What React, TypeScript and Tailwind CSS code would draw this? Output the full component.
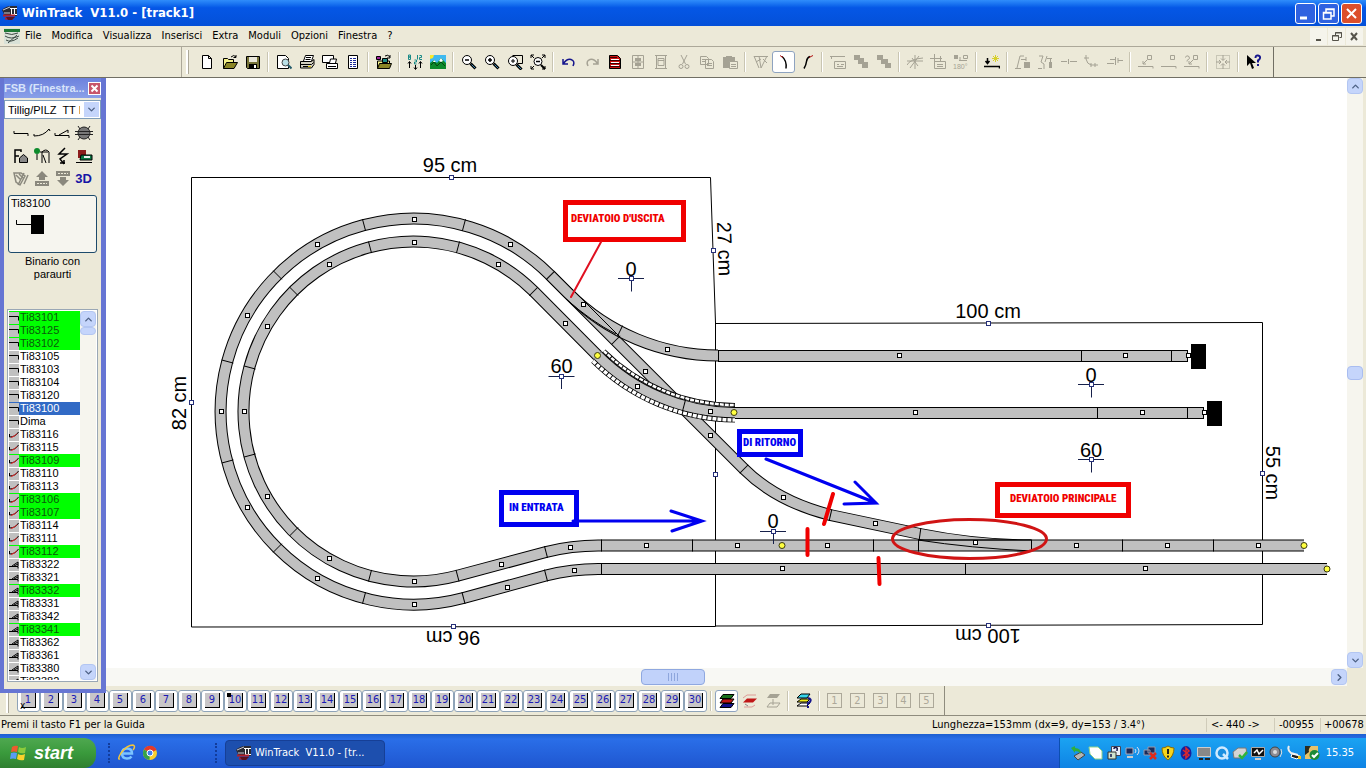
import type { ReactNode } from "react";
import clsx from "clsx";
import { ChevronDown, ChevronRight, ChevronUp } from "lucide-react";

const GREY = "#a5a294";

const MENUS = ["File", "Modifica", "Visualizza", "Inserisci", "Extra", "Moduli", "Opzioni", "Finestra", "?"];

/* ---------- toolbar icons, all on a 16x16 grid ---------- */

const lens = (
  <>
    <circle cx="6" cy="6" r="4.5" fill="#fff" stroke="#000" />
    <path d="M9.5 9.5l5 5" stroke="#000" strokeWidth="3" />
    <path d="M10.5 10.5l3.5 3.5" stroke="#3d8ab5" />
  </>
);

const ICONS: Record<string, ReactNode> = {
  Nuovo: <path d="M3.5 1.5h6l3 3v10h-9zM9.5 1.5v3h3" fill="#fff" stroke="#000" />,
  Apri: (
    <>
      <path d="M1.5 14.5v-10h4l1 1h5v3" fill="#f3f08a" stroke="#000" />
      <path d="M1.5 14.5l3-6h11l-3.500 6z" fill="#8a8526" stroke="#000" />
      <path d="M9 3q3-3 5 0m0-2v2.500h-2.500" fill="none" stroke="#000" />
    </>
  ),
  Salva: (
    <>
      <path d="M1.500 2.500h13v12h-12l-1-1z" fill="#77743a" stroke="#000" />
      <path d="M4 3h8v5H4z" fill="#e8e6da" />
      <path d="M4 10h8v4H4z" />
      <path d="M9 11h2v3H9z" fill="#fff" />
    </>
  ),
  Anteprima: (
    <>
      <path d="M1.500 1.500h8l3 3v10h-11z" fill="#fff" stroke="#000" />
      <circle cx="9.500" cy="8.500" r="3.500" fill="#b9dfe6" stroke="#444" />
      <path d="M12 11l3.500 3.500" stroke="#245b6b" strokeWidth="2" />
    </>
  ),
  Stampa: (
    <>
      <path d="M4.500 7l2-5.500h8L12.500 7" fill="#fff" stroke="#000" />
      <path d="M7 3.500h5M6.500 5.500h5" stroke="#000" />
      <path d="M1.500 7.500h11l2.500-2v5l-2.500 3.500h-11z" fill="#d5d2c2" stroke="#000" />
      <path d="M2 10.500h10.500l2-2M4 12.500h5" fill="none" stroke="#000" />
      <path d="M9 12.500h3" stroke="#d8c200" />
    </>
  ),
  "Imposta stampante": (
    <>
      <path d="M.5 1.500h11v7H.5z" fill="#fff" stroke="#000" />
      <path d="M7.500 9l1-4h6l-1 4M4.500 9.500h11v5h-11z" fill="#fff" stroke="#000" />
      <path d="M6 12.500h8" stroke="#000" />
    </>
  ),
  "Elenco pezzi": (
    <>
      <path d="M3.500 1.500h9v13h-9z" fill="#fff" stroke="#000" />
      <path d="M5 4.500h2m1 0h3M5 6.500h2m1 0h3M5 8.500h2m1 0h3M5 10.500h2m1 0h3M5 12.500h2m1 0h3" stroke="#1b2a9a" />
    </>
  ),
  Catalogo: (
    <>
      <path d="M1.500 14.500V7h12v2" fill="#f3f08a" stroke="#000" />
      <path d="M1.500 14.500l2-5h12l-2 5z" fill="#8a8526" stroke="#000" />
      <path d="M.5 2.500h4v3h-4z" fill="#a0209c" stroke="#000" />
      <path d="M6.500 4.500h5v4h-5z" fill="#1f8c86" stroke="#000" />
      <path d="M9 2q3-2 5 1m0-2v3h-3" fill="none" stroke="#000" />
    </>
  ),
  Quote: (
    <>
      <path d="M2.500 14V8m-1.500 1.500l1.500-2 1.500 2M8.500 11v4m-1.500-1.500l1.500 2 1.500-2M13.500 14V8m-1.500 1.500l1.500-2 1.500 2" fill="none" stroke="#000" />
      <path d="M1.500 1h2v2h-2zm0 2h2v2.500h-2zM7.500 6h2v2h-2v2h2M10.500 1v4.500M12.500 1.500h2v2h-2v2H15" fill="none" stroke="#198a86" />
    </>
  ),
  Paesaggio: (
    <>
      <path d="M0 1h16v14H0z" fill="#3fb9f0" />
      <path d="M0 1h4l-1 3-3 1z" fill="#fbe92a" />
      <path d="M0 9l4-3 3 3 4-5 5 5v6H0z" fill="#0c8a2b" />
      <path d="M3 8l1-2 2 2zm6-1l2-3 2 3-2 1z" fill="#fff" />
      <path d="M1 11l3-3 3 4 4-4 4 4" fill="none" stroke="#034511" />
    </>
  ),
  Riduci: (
    <>
      {lens}
      <path d="M4 6h4" stroke="#000" strokeWidth="1.500" />
    </>
  ),
  Ingrandisci: (
    <>
      {lens}
      <path d="M4 6h4M6 4v4" stroke="#000" strokeWidth="1.500" />
    </>
  ),
  "Zoom area": (
    <>
      <path d="M5.500 1.500h10v8h-5" fill="none" stroke="#000" />
      <g transform="translate(0 1)">
        {lens}
        <path d="M4 6h4M6 4v4" stroke="#000" />
      </g>
    </>
  ),
  "Zoom tutto": (
    <>
      <path d="M1 4V1h3M12 1h3v3M1 12v3h3M12 15h3v-3M1 1l3 3M15 1l-3 3M1 15l3-3" fill="none" stroke="#000" />
      <circle cx="8" cy="7.500" r="4" fill="#fff" stroke="#000" />
      <path d="M6 7.500h4" stroke="#000" strokeWidth="1.500" />
      <path d="M11 11l4 4" stroke="#000" strokeWidth="2" />
    </>
  ),
  Annulla: <path d="M2 5v5h5M2.500 9.500Q6 4.500 10 5.500 14.500 7 12 12" fill="none" stroke="#14148c" strokeWidth="1.500" />,
  Ripeti: <path d="M14 5v5H9M13.500 9.500Q10 4.500 6 5.500 1.500 7 4 12" fill="none" stroke={GREY} strokeWidth="1.500" />,
  Proprietà: (
    <>
      <path d="M2.500 1.500h8l3 3v10h-11z" fill="#c11" stroke="#000" />
      <path d="M3 3.500h7M3 6.500h10M3 9.500h10M3 12.500h10" stroke="#3c0000" />
      <path d="M4 5.500h8M4 8.500h8M4 11.500h8" stroke="#fff" />
    </>
  ),
  "Sezione A": (
    <>
      <path d="M2.500 1.500h11v13h-11zM8 1v14M3 8h10" fill="none" stroke={GREY} />
      <path d="M5 4h6v3H5zM5 9h6v3H5z" fill={GREY} />
    </>
  ),
  "Sezione B": <path d="M2 1.500h12M2 14.500h12M3.500 1v14M12.500 1v14M5 4.500h6v7H5zM5 6.500h6" fill="none" stroke={GREY} />,
  Taglia: (
    <g fill="none" stroke={GREY}>
      <path d="M5 1l4.500 9M11 1L6.500 10" />
      <circle cx="5" cy="12.500" r="2" />
      <circle cx="11" cy="12.500" r="2" />
    </g>
  ),
  Copia: <path d="M1.500 2.500h6l2 2v6h-8zM6.500 5.500h6l2 2v7h-8zM3 5.500h4M3 7.500h3M8 9.500h5M8 11.500h5" fill="none" stroke={GREY} />,
  Incolla: (
    <>
      <path d="M1 3h12v11H1z" fill={GREY} />
      <path d="M7.500 7.500h8v7h-8z" fill="#ece9d8" stroke={GREY} />
      <path d="M9 10.500h5M9 12.500h5M4 2.500h6" stroke={GREY} />
    </>
  ),
  Scambio: <path d="M1 2.500h14M1 2l5 12M6 2l2 12M14 2L8 14M10 5l4 4M3 8l5-3" fill="none" stroke={GREY} />,
  "Curva sinistra": (
    <>
      <path d="M6 2.500q5 4 4 12" fill="none" stroke="#000" strokeWidth="1.500" />
      <path d="M4 1.500l3 2" stroke="#b01010" />
    </>
  ),
  "Curva destra": (
    <>
      <path d="M11 2.500q-3 1-3.500 5T5 14.500" fill="none" stroke="#000" strokeWidth="1.500" />
      <path d="M14 1.500l-4 2" stroke="#b01010" />
    </>
  ),
  Etichetta: <path d="M0 2.500h15M1.500 2v3M4.500 7.500h11v7h-11zM7 10.500h2m2 0h3M7 12.500h6" fill="none" stroke={GREY} />,
  "In primo piano": <path d="M1 1h6v5H1zM5 4h6v6H5zM9 8h6v6H9z" fill={GREY} />,
  "In secondo piano": <path d="M1 1h6v5H1zM5 5h7v5H5zM9 9h6v5H9z" fill={GREY} />,
  Ruota: <path d="M0 11q3-6 16-7M0 7h16M8 1v14M3 14l9-12M5 4l6 8" fill="none" stroke={GREY} />,
  Sposta: <path d="M0 4.500h12M4.500 0v9M10.500 2v5M4.500 7.500h11v7h-11zM7 10.500h6M7 12.500h6" fill="none" stroke={GREY} />,
  "Ruota di 180°": (
    <>
      <path d="M1 1h4v4H1z" fill={GREY} />
      <path d="M10.500 1.500h4v3h-4zM6 6.500h8M7 3v4" fill="none" stroke={GREY} />
      <text x="0" y="15" fontSize="7" fontFamily="Liberation Sans" fill={GREY}>180°</text>
    </>
  ),
  Posiziona: (
    <>
      <path d="M3.500 4v5M1.500 7l2 2.500 2-2.500M0 12.500h15.500v2" fill="none" stroke="#000" strokeWidth="1.500" />
      <path d="M11.500 1v7M8 4.500h7M9 2l5 5M14 2L9 7" stroke="#d8d02a" />
    </>
  ),
  "Aggancia A": (
    <>
      <path d="M2 14l3-12h4M0 14.500h6M6 5.500h5M11 3v4" fill="none" stroke={GREY} />
      <path d="M9 8h6v6H9z" fill={GREY} />
    </>
  ),
  "Aggancia B": (
    <>
      <path d="M1 2h4L3 8l3 2v5M0 14.500h4M9 2L7 8M9 4.500h5M12.500 5v3" fill="none" stroke={GREY} />
      <path d="M11 8h3v6h-3z" fill={GREY} />
    </>
  ),
  Dritto: <path d="M0 7.500h6M9 7.500h7M7.500 5v5" stroke={GREY} />,
  Flessibile: <path d="M2 1v4q1 5 5 6h7M0 4h5M7 9v4M11 9v4" fill="none" stroke={GREY} />,
  Unisci: <path d="M0 9.500h7M3 5.500h5M8.500 3v8M11 6.500h5M11 4v5" fill="none" stroke={GREY} />,
  "Segmento A": <path d="M0 12.500h15v2M9.500 1.500h4v4h-4zM9 6l-4 4M5 7v3h3" fill="none" stroke={GREY} />,
  "Segmento B": <path d="M0 12.500h15v2M9.500 1.500h4v4h-4z" fill="none" stroke={GREY} />,
  "Segmento C": <path d="M0 12.500h15v2M9.500 1.500h4v4h-4zM1 3.500q2-3 4-1t-2 4v1M9 6l-4 4M5 7v3h3" fill="none" stroke={GREY} />,
  Centra: (
    <g fill="none" stroke={GREY}>
      <path d="M1.500 1.500h13v13h-13z" strokeDasharray="1 1" />
      <path d="M8 1v5M8 10v5M1 8h5M10 8h5M6 4.500l2 2 2-2M6 11.500l2-2 2 2M4 6l2 2-2 2M12 6l-2 2 2 2" />
    </g>
  ),
  Guida: (
    <>
      <path d="M1 1v11l3-3 2 6 2-1-2-5h4z" />
      <path d="M9.500 4q0-3 2.500-2.500t2 2.500-2 2.500v2M12 10v2" fill="none" stroke="#14148c" strokeWidth="2" />
    </>
  ),
  "Tutti i livelli": (
    <>
      <path d="M1 14.500l3-4h11l-3 4z" fill="#11118a" stroke="#000" />
      <path d="M1 10l3-4h11l-3 4z" fill="#c01616" stroke="#000" />
      <path d="M1 5.500l3-4h11l-3 4z" fill="#16701c" stroke="#000" />
    </>
  ),
  "Livello attivo": (
    <>
      <path d="M1 5l4-3h9M13 12l-3 2H2" fill="none" stroke="#dc9b96" />
      <path d="M1 9.500l4-4h10l-4 4z" fill="#c01616" />
      <path d="M3 11l3 2" stroke="#888" />
    </>
  ),
  "Livello superiore": (
    <>
      <path d="M2 5l3-4h10l-3 4z" fill={GREY} />
      <path d="M8 6v6M2 14l3-4h10l-3 4z" fill="none" stroke={GREY} />
    </>
  ),
  Livelli: (
    <>
      <path d="M1 13l4-3h9l-3 3z" fill="#fff" stroke="#000" />
      <path d="M1 9l4-3h9l-3 3z" fill="#f3ee1c" stroke="#000" />
      <path d="M1 5l4-4h9l-3 4z" fill="#35d5ea" stroke="#000" />
      <path d="M12 5q4 1 2 4l-2 1v2M12 13v2" fill="none" stroke="#14148c" strokeWidth="2" />
    </>
  ),
};

const TOOL_GROUPS = [
  ["Nuovo", "Apri", "Salva"],
  ["Anteprima", "Stampa", "Imposta stampante", "Elenco pezzi"],
  ["Catalogo"],
  ["Quote", "Paesaggio"],
  ["Riduci", "Ingrandisci", "Zoom area", "Zoom tutto"],
  ["Annulla", "Ripeti", "Proprietà", "Sezione A", "Sezione B", "Taglia", "Copia", "Incolla"],
  ["Scambio", "Curva sinistra", "Curva destra"],
  ["Etichetta", "In primo piano", "In secondo piano"],
  ["Ruota", "Sposta", "Ruota di 180°"],
  ["Posiziona"],
  ["Aggancia A", "Aggancia B", "Dritto", "Flessibile", "Unisci"],
  ["Segmento A", "Segmento B", "Segmento C"],
  ["Centra"],
  ["Guida"],
];

function ToolButton({ name, active }: { name: string; active?: boolean }) {
  return (
    <button
      type="button"
      aria-label={name}
      className={clsx(
        "flex h-[22px] w-[23px] shrink-0 items-center justify-center rounded-[3px]",
        active && "border border-[#8ea3c0] bg-white",
      )}
    >
      <svg viewBox="0 0 16 16" className="h-4 w-4 shrink-0">{ICONS[name]}</svg>
    </button>
  );
}

function Separator() {
  return <div className="mx-[3px] h-5 w-0.5 shrink-0 border-l border-[#c9c5b2] bg-white" />;
}

function Grip() {
  return <div className="h-6 w-[3px] shrink-0 border-r border-[#aca899] bg-white" />;
}

/* ---------- title, menu and tool bars ---------- */

function AppLogo() {
  return (
    <svg viewBox="0 0 16 16" className="h-4 w-4 shrink-0">
      <path d="M0 5q4-4 9-4h6v10H3z" fill="#2b2b33" />
      <path d="M1 5l7-3M2 8h6" stroke="#c9c9d2" />
      <path d="M9.500 3v6M12.500 3v6M8 3.500h7M9 9.500h6" stroke="#fff" />
      <path d="M1 10.500h12M3 13.500h8" stroke="#b3202b" strokeWidth="2" />
      <path d="M4 12h9l-3 3H6z" fill="#5c1220" />
    </svg>
  );
}

const WINDOW_BUTTONS = [
  { label: "Riduci a icona", d: "M4 14h7", red: false },
  { label: "Ripristina", d: "M7 8V5h8v7h-3M4.500 8.500h7.500v6.500H4.500zM7 5.500h8M4 9h8", red: false },
  { label: "Chiudi", d: "M5 5l9 9M14 5l-9 9", red: true },
];

function TitleBar() {
  return (
    <header className="flex h-[26px] shrink-0 items-center gap-1 bg-linear-to-b from-[#2f8dfb] via-[#0557e6] via-30% to-[#0450d8] pr-1 pl-0.5">
      <AppLogo />
      <h1 className="flex-1 whitespace-pre font-['DejaVu_Sans_Condensed','Liberation_Sans',sans-serif] text-[13px] font-bold text-white">
        WinTrack{"  "}V11.0 - [track1]
      </h1>
      <div className="flex gap-0.5">
        {WINDOW_BUTTONS.map((b) => (
          <button
            key={b.label}
            type="button"
            aria-label={b.label}
            className={clsx("h-[21px] w-[21px] rounded-[3px] border border-white", b.red ? "bg-[#dc4f2b]" : "bg-[#2f62e0]")}
          >
            <svg viewBox="0 0 19 19" className="h-[19px] w-[19px]">
              <path d={b.d} fill="none" stroke="#fff" strokeWidth={b.red ? 2 : b.d.length < 8 ? 3 : 1.5} />
            </svg>
          </button>
        ))}
      </div>
    </header>
  );
}

function MenuBar() {
  return (
    <nav className="flex h-5 shrink-0 items-center bg-[#ece9d8] pr-0.5 pl-1">
      <svg viewBox="0 0 16 16" className="h-4 w-4 shrink-0">
        <path d="M0 0h16v16H0z" fill="#d9e2d8" />
        <path d="M0 1h16v3H0z" fill="#1d7a35" />
        <path d="M1 5q7 3 13 0M1 8q6 4 14 0M2 12q5 3 12-2M4 15l9-8" fill="none" stroke="#3d4a44" />
      </svg>
      <ul className="flex flex-1">
        {MENUS.map((m) => (
          <li key={m}>
            <button type="button" className="px-[5px]">{m}</button>
          </li>
        ))}
      </ul>
      {["M4 10h5", "M5.500 5V2.500h6v5h-2M2.500 5.500h6v5h-6zM2 6h7M5 3h7", "M3 3l6 7M9 3l-6 7"].map((d, i) => (
        <button
          key={d}
          type="button"
          aria-label={["Riduci documento", "Ripristina documento", "Chiudi documento"][i]}
          className="mr-px flex h-[17px] w-[17px] items-center justify-center bg-[#f5f4ec]"
        >
          <svg viewBox="0 0 13 13" className="h-[13px] w-[13px]">
            <path d={d} fill="none" stroke="#55534a" strokeWidth={i === 1 ? 1 : 2} />
          </svg>
        </button>
      ))}
    </nav>
  );
}

function ToolBar() {
  return (
    <div className="flex h-8 shrink-0 items-center border-t border-b border-t-[#aca899] border-b-[#716f64] bg-[#ece9d8]">
      <div className="h-full w-[182px] shrink-0 border-r border-[#aca899]" />
      <div className="flex h-full items-center border-r border-[#716f64] pr-2 pl-1">
        <Grip />
        <div className="w-1.5" />
        {TOOL_GROUPS.map((group, i) => (
          <div key={group[0]} className="flex items-center">
            {i > 0 && <Separator />}
            {group.map((name) => (
              <ToolButton key={name} name={name} active={name === "Curva sinistra"} />
            ))}
          </div>
        ))}
      </div>
    </div>
  );
}

/* ---------- parts palette ---------- */

const PALETTE_ICONS: [string, ReactNode][] = [
  ["Binari diritti", <path d="M2 7v2.500h14V12" fill="none" stroke="#000" />],
  ["Curve", <path d="M1 10v2q10 0 15-7l1 2" fill="none" stroke="#000" />],
  ["Scambi", <path d="M1 9v2.500h14V14M5 11l9-5v3" fill="none" stroke="#000" />],
  [
    "Piattaforme",
    <>
      <circle cx="9" cy="9" r="6" fill="#777" stroke="#222" />
      <path d="M0 7.500h18M0 10.500h18M3 2l2 3M15 2l-2 3M3 16l2-3M15 16l-2-3" stroke="#222" />
    </>,
  ],
  [
    "Fabbricati",
    <>
      <path d="M3 16V3h6v2M3 9h4" fill="none" stroke="#000" strokeWidth="1.500" />
      <path d="M7.500 11l4-3.500 4 3.500v4.500h-8z" fill="#888" stroke="#000" />
    </>,
  ],
  [
    "Segnali",
    <>
      <circle cx="4" cy="4" r="3" fill="#0c8a2b" />
      <path d="M4 7v6M9 16V5q4-4 7 0v11M10 8l3 8M7 5h8" fill="none" stroke="#000" />
    </>,
  ],
  ["Elettrico", <path d="M11 1L5 7h8L6 12l4 5M6 16h5M10 13v4" fill="none" stroke="#000" strokeWidth="1.500" />],
  [
    "Paesaggio",
    <>
      <path d="M3 3h8v8H3z" fill="#8c1c1c" />
      <path d="M6 8h11v5H5z" fill="#0f7a46" stroke="#000" />
      <path d="M9 9h6v2H9z" fill="#eee" />
      <path d="M1 15.500h16" stroke="#000" />
    </>,
  ],
  ["Modifica", <path d="M2 3h7l4 3-5 9-4-3zM12 14l4-9M4 5l5 5M7 4l4 4M12 3l-6 12" fill="none" stroke="#8a887d" strokeWidth="1.500" />],
  [
    "Su",
    <>
      <path d="M9 1l6 6h-3v3H6V7H3z" fill="#8a887d" />
      <path d="M2 11h14v5H2z" fill="#8a887d" />
      <path d="M4 13.500h10" stroke="#ece9d8" strokeDasharray="2 1" />
    </>,
  ],
  [
    "Giù",
    <>
      <path d="M9 16l6-6h-3V7H6v3H3z" fill="#8a887d" />
      <path d="M2 1h14v5H2z" fill="#8a887d" />
      <path d="M4 3.500h10" stroke="#ece9d8" strokeDasharray="2 1" />
    </>,
  ],
];

const IN_STOCK = ["Ti83101", "Ti83125", "Ti83102", "Ti83109", "Ti83106", "Ti83107", "Ti83112", "Ti83332", "Ti83341"];

const PARTS = [
  { d: "M0 4.500h9.500v4", names: ["Ti83101", "Ti83125", "Ti83102", "Ti83105", "Ti83103", "Ti83104", "Ti83120", "Ti83100", "Dima"] },
  {
    d: "M0.500 5v3q6 0 9-5",
    names: ["Ti83116", "Ti83115", "Ti83109", "Ti83110", "Ti83113", "Ti83106", "Ti83107", "Ti83114", "Ti83111", "Ti83112"],
  },
  {
    d: "M0 7.500h9v2M3 7l6-4v4M5 7l4-2",
    names: ["Ti83322", "Ti83321", "Ti83332", "Ti83331", "Ti83342", "Ti83341", "Ti83362", "Ti83361", "Ti83380", "Ti83382"],
  },
];

function ScrollButton({ label, children }: { label: string; children: ReactNode }) {
  return (
    <button
      type="button"
      aria-label={label}
      className="flex h-4 w-4 shrink-0 items-center justify-center rounded-sm border border-[#b3c6f2] bg-[#c5d5fb] text-[#4d6185]"
    >
      {children}
    </button>
  );
}

function Palette() {
  return (
    <aside className="absolute top-0 left-0 z-10 flex h-[615px] w-[106px] flex-col border-4 border-t-0 border-r-[5px] border-[#6675d3] bg-[#ece9d8] font-['Liberation_Sans',sans-serif]">
      <div className="flex h-5 shrink-0 items-center bg-linear-to-b from-[#6d82dd] to-[#8aa0e8]">
        <h2 className="flex-1 whitespace-nowrap text-[11px] font-bold text-[#d8e4fa]">FSB (Finestra...</h2>
        <button type="button" aria-label="Chiudi FSB" className="h-[13px] w-[13px] shrink-0 border border-white bg-[#c7566b]">
          <svg viewBox="0 0 11 11" className="h-[11px] w-[11px]">
            <path d="M2.500 2.500l6 6M8.500 2.500l-6 6" stroke="#fff" strokeWidth="2" />
          </svg>
        </button>
      </div>

      <div className="relative mt-0.5 shrink-0">
        <select aria-label="Sistema di binari" className="block h-[19px] w-full appearance-none whitespace-pre border border-[#7f9db9] bg-white pr-5 pl-[3px] text-[11px]">
          <option>Tillig/PILZ&nbsp; TT Modellgleis</option>
        </select>
        <span className="pointer-events-none absolute top-0.5 right-0.5 flex h-[15px] w-[15px] items-center justify-center bg-[#c5d5fb] text-[#4d6185]">
          <ChevronDown size={11} strokeWidth={3} />
        </span>
      </div>

      <div className="mt-0.5 grid shrink-0 grid-cols-4 px-[7px]">
        {PALETTE_ICONS.map(([label, art]) => (
          <button key={label} type="button" aria-label={label} className="flex h-[23px] items-center justify-center">
            <svg viewBox="0 0 18 18" className="h-[18px] w-[18px] shrink-0">{art}</svg>
          </button>
        ))}
        <button type="button" className="flex h-[23px] items-center justify-center text-[13px] font-bold text-[#1515a5]">
          3D
        </button>
      </div>

      <button type="button" className="mx-1 mt-[5px] flex h-[58px] shrink-0 flex-col rounded-[3px] border border-[#1d4a6b] bg-[#f6f5ef] pl-0.5 text-left text-[11px]">
        Ti83100
        <svg viewBox="0 0 40 20" className="mt-1 h-5 w-10">
          <path d="M5.500 6v4.500H20" fill="none" stroke="#000" />
          <path d="M20 1h13v19H20z" />
        </svg>
      </button>
      <p className="mt-0.5 shrink-0 px-2 text-center text-[11px] leading-[13px]">Binario con paraurti</p>

      <div className="mx-[3px] mt-7 mb-[7px] flex min-h-0 flex-1 border border-[#9aa7b5] bg-white p-px">
        <ul className="flex-1 overflow-hidden">
          {PARTS.map((set, s) =>
            set.names.map((name) => (
              <li
                key={name}
                className={clsx(
                  "flex h-[13px] items-center gap-px text-[11px] leading-[13px]",
                  IN_STOCK.includes(name) && "bg-[#00ff00] text-[#0a5a0a]",
                  name === "Ti83100" && "bg-[#316ac5] text-white",
                )}
              >
                <svg viewBox="0 0 10 12" className="h-3 w-2.5 shrink-0 bg-[#c0c0c0]">
                  <path d={set.d} fill="none" stroke="#000" />
                  {s === 1 && <path d="M2 8.500q4-1 6-4" fill="none" stroke="#e22" />}
                </svg>
                {name}
              </li>
            )),
          )}
        </ul>
        <div className="flex w-4 flex-col bg-[#f6f5ee]">
          <ScrollButton label="Elenco su">
            <ChevronUp size={11} strokeWidth={3} />
          </ScrollButton>
          <div className="h-2 rounded-sm border border-[#b3c6f2] bg-[#c5d5fb]" />
          <div className="flex-1" />
          <ScrollButton label="Elenco giù">
            <ChevronDown size={11} strokeWidth={3} />
          </ScrollButton>
        </div>
      </div>
    </aside>
  );
}

/* ---------- track plan ---------- */

const CX = 414;
const CY = 411.5;

const TRACKS = [
  // return line through the crossing down to the main turnout
  "M550 275L744 469Q776 501 830 515L920 534Q975 545 1031 545.5",
  "M550 275L568 293A212 212 0 0 0 718 355.5",
  "M718 356H1187",
  // outer loop
  "M550 275A193 193 0 1 0 463.500 598L546 575.500A212 212 0 0 1 601 569H1327",
  // inner loop
  "M597.500 355.500L533.700 291.300A170 170 0 1 0 457.500 575.700L546 552A212 212 0 0 1 601 545.500H1304",
  "M734 413H1203",
  "M597.500 355.500A195 195 0 0 0 734 413",
];

const STRAIGHT_JOINTS = [
  [718, 356], [1081, 356], [1171, 356], [1187, 356], [1097, 413], [1187, 413], [1203, 413],
  [601, 545.5], [692, 545.5], [873, 545.5], [918, 545.5], [1031, 545.5], [1122, 545.5], [1213, 545.5],
  [601, 569], [965, 569],
];

// x, y, rotation of the joint line away from vertical
const TURNED_JOINTS = [
  [550.5, 275.5, 45], [533.5, 291.5, 45], [616, 340, 45], [620, 331, 26], [684, 405.5, 15], [744, 469, 45],
  [830.5, 515, 13], [920, 534, 8], [457.5, 575.7, -15], [546, 552, -15], [463.5, 598, -15], [546, 575.5, -15],
];

const RING_JOINTS = [-165, -135, -105, -75, -45, -15, 15];

const MARKERS = [
  [583.5, 304.5], [565.5, 323.5], [667.5, 349.5], [645.5, 371.5], [637.5, 386.5], [710.5, 411.5], [710, 435.5],
  [783, 497.5], [875.5, 523.5], [975.5, 542.5], [899, 355.5], [1125, 355.5], [1188, 355.5], [915, 412.5],
  [1142, 412.5], [1204, 412.5], [501, 564], [570, 547.5], [646, 545.5], [737, 545.5], [827, 545.5],
  [1076, 545.5], [1167, 545.5], [1258, 545.5], [507.5, 587.5], [574, 570.5], [782.5, 568.5], [1145, 568.5],
];

const DIM_HANDLES = [
  [451, 177.5], [713, 250.5], [191.5, 402.5], [453.5, 626.5], [988.5, 323], [988.5, 625.5], [1262, 473.5], [715.5, 474.5],
];

const DIM_LABELS: [string, number, number, number][] = [
  ["95 cm", 450, 165, 0],
  ["27 cm", 725, 249, 88],
  ["82 cm", 179, 403, -90],
  ["96 cm", 453, 638, 180],
  ["100 cm", 988, 311, 0],
  ["100 cm", 988, 636, 180],
  ["55 cm", 1273, 473, 90],
];

const HEIGHTS: [string, number, number][] = [
  ["0", 631, 278.5],
  ["60", 561.5, 376],
  ["0", 773, 531],
  ["0", 1091, 384.5],
  ["60", 1091, 459.5],
];

const ENDPOINTS = [[597.5, 355.5], [734, 412.5], [782, 545.5], [1304, 545.5], [1327, 569]];

const NOTES = [
  { text: "DEVIATOIO D'USCITA", x: 565.5, y: 202.5, w: 118, h: 37, tx: 571, ty: 222, color: "#f00000" },
  { text: "DEVIATOIO PRINCIPALE", x: 997.5, y: 484.5, w: 131, h: 31, tx: 1010, ty: 502, color: "#f00000" },
  { text: "DI RITORNO", x: 739.5, y: 431.5, w: 61, h: 23, tx: 743, ty: 446, color: "#0000f0" },
  { text: "IN ENTRATA", x: 501.5, y: 492.5, w: 75, h: 32, tx: 509, ty: 511, color: "#0000f0" },
];

function polar(r: number, deg: number) {
  const a = (deg * Math.PI) / 180;
  return [CX + r * Math.sin(a), CY - r * Math.cos(a)];
}

function Square({ x, y, color }: { x: number; y: number; color: string }) {
  return (
    <rect x={Math.floor(x) - 1.5} y={Math.floor(y) - 1.5} width="4" height="4" fill="#fff" stroke={color} shapeRendering="crispEdges" />
  );
}

function TrackPlan() {
  const ringMarkers = [193, 170].flatMap((r) => [-180, -150, -120, -90, -60, -30, 0, 30].map((d) => polar(r - 0.5, d)));

  return (
    <svg viewBox="0 78 1347 589" className="h-[589px] w-[1347px] shrink-0" role="img" aria-label="Piano dei binari">
      <g fill="none" stroke="#000">
        <path d="M715.500 626.500L191.500 627V177.500H710.500L715.500 323V626.500" />
        <path d="M715.500 323.500L1262.500 322.500V624.500L715.500 626" />
      </g>

      {TRACKS.map((d) => (
        <g key={d} fill="none">
          <path d={d} stroke="#000" strokeWidth="12" />
          <path d={d} stroke="#c0c0c0" strokeWidth="10" />
        </g>
      ))}
      {/* thin outlines of the diverging rails inside the turnouts */}
      <path d="M571 288L620 337M566 299Q592 322 616 334M918 540Q970 548 1031 551M918 540H1031" fill="none" stroke="#000" />

      {/* embankment along the ramp */}
      {[
        { d: "M604 351A187 187 0 0 0 735 405", w: 4 },
        { d: "M593 361A204 204 0 0 0 735 420", w: 5 },
      ].map(({ d, w }) => (
        <g key={d} fill="none">
          <path d={d} stroke="#000" strokeWidth={w} />
          <path d={d} stroke="#fff" strokeWidth={w - 1.5} strokeDasharray="4 1" />
        </g>
      ))}

      <g stroke="#000">
        {STRAIGHT_JOINTS.map(([x, y]) => (
          <path key={`${x}-${y}`} d={`M${x + 0.5} ${y - 6}v12`} />
        ))}
        {TURNED_JOINTS.map(([x, y, a]) => (
          <path key={`${x}-${y}`} d={`M${x} ${y - 6}v12`} transform={`rotate(${a} ${x} ${y})`} />
        ))}
        {[193, 170].map((r) =>
          RING_JOINTS.map((a) => {
            const [x1, y1] = polar(r - 6, a);
            const [x2, y2] = polar(r + 6, a);
            return <path key={`${r}${a}`} d={`M${x1} ${y1}L${x2} ${y2}`} />;
          }),
        )}
      </g>

      <path d="M1191 344h15v25h-15zM1207 401h15v25h-15z" />

      {[...ringMarkers, ...MARKERS].map(([x, y]) => (
        <Square key={`${x}-${y}`} x={x} y={y} color="#000" />
      ))}
      {ENDPOINTS.map(([x, y]) => (
        <circle key={x} cx={x} cy={y} r="3" fill="#ffff40" stroke="#3a3a10" />
      ))}
      {DIM_HANDLES.map(([x, y]) => (
        <Square key={`${x}-${y}`} x={x} y={y} color="#26307a" />
      ))}

      <g fontFamily="Liberation Sans, Arial, sans-serif" fontSize="20" textAnchor="middle">
        {DIM_LABELS.map(([text, x, y, a]) => (
          <text key={`${text}${y}`} x={x} y={y + 7} transform={`rotate(${a} ${x} ${y})`}>{text}</text>
        ))}
        {HEIGHTS.map(([text, x, y]) => (
          <g key={`${x}-${y}`}>
            <text x={x} y={y - 3}>{text}</text>
            <path d={`M${x - 13} ${Math.floor(y) + 0.5}h26M${Math.floor(x) + 0.5} ${y}v13`} stroke="#16204a" />
            <Square x={x} y={y} color="#26307a" />
          </g>
        ))}
      </g>

      {/* hand-made notes on top of the plan */}
      <g fontFamily="Liberation Sans Narrow, Roboto Condensed, Liberation Sans, sans-serif" fontSize="11" fontWeight="900">
        {NOTES.map((n) => (
          <g key={n.text}>
            <rect x={n.x} y={n.y} width={n.w} height={n.h} fill="#fff" stroke={n.color} strokeWidth="5" />
            <text x={n.tx} y={n.ty} fill={n.color}>{n.text}</text>
          </g>
        ))}
      </g>
      <g fill="none" strokeLinecap="round">
        <path d="M601 242L571 297" stroke="#e01020" strokeWidth="2" />
        <path d="M573 521H702M671 511L702 521L672 531M766 459L876 503M855 482L876 503L844 504" stroke="#0000f0" strokeWidth="3" />
        <path d="M833 494L824 524M807.500 529V555M878.500 558L879.500 584" stroke="#f00000" strokeWidth="4" />
        <ellipse cx="969.500" cy="539" rx="77" ry="19.500" stroke="#d01414" strokeWidth="3" />
      </g>
    </svg>
  );
}

function Workspace() {
  return (
    <main className="relative flex flex-1 flex-col">
      <div className="flex flex-1">
        <div className="w-0 flex-1 overflow-hidden bg-white">
          <TrackPlan />
        </div>
        <div className="mr-[3px] flex w-4 flex-col bg-[#f6f5ee]">
          <ScrollButton label="Scorri su">
            <ChevronUp size={11} strokeWidth={3} />
          </ScrollButton>
          <div className="flex-1" />
          <div className="h-3.5 rounded-sm border border-[#a9bdf0] bg-[#c5d5fb]" />
          <div className="flex-1" />
          <ScrollButton label="Scorri giù">
            <ChevronDown size={11} strokeWidth={3} />
          </ScrollButton>
        </div>
      </div>
      <div className="mr-[19px] flex h-[18px] shrink-0 items-center bg-[#f8f8f4] pl-3.5">
        <div className="flex-1" />
        <div className="flex h-4 w-16 items-center justify-center gap-0.5 rounded-sm border border-[#8fa8e0] bg-[#c1d2fa]">
          {[0, 1, 2, 3].map((i) => (
            <span key={i} className="h-2 w-px bg-[#8ea6dc]" />
          ))}
        </div>
        <div className="flex-1" />
        <ScrollButton label="Scorri a destra">
          <ChevronRight size={11} strokeWidth={3} />
        </ScrollButton>
      </div>
      <Palette />
    </main>
  );
}

/* ---------- bottom bars ---------- */

function LayerBar() {
  return (
    <div className="flex h-[30px] shrink-0 items-center border-b border-[#8f8c7e] bg-[#ece9d8]">
      <div className="flex h-full items-center border-r border-[#8f8c7e] pr-1.5 pl-1.5">
        <Grip />
        <div className="w-2" />
        {Array.from({ length: 30 }, (_, i) => i + 1).map((n) => (
          <button key={n} type="button" className="relative flex h-[22px] w-[23px] shrink-0 items-center justify-center rounded-[3px] border border-[#8ea3b8] bg-white">
            <span className="flex h-[15px] w-[15px] items-center justify-center border-r border-b border-black bg-[#c8c6c8] text-[11px] text-[#1a1ab4]">
              {n}
            </span>
            {n === 10 && <span className="absolute top-0.5 left-0.5 h-1 w-1 bg-black" />}
            {n === 1 && <span className="absolute bottom-0 left-0.5 text-[10px] leading-[10px]">x</span>}
          </button>
        ))}
        <Separator />
        <ToolButton name="Tutti i livelli" active />
        <ToolButton name="Livello attivo" />
        <ToolButton name="Livello superiore" />
        <Separator />
        <ToolButton name="Livelli" />
        <Separator />
        {[1, 2, 3, 4, 5].map((n) => (
          <button key={n} type="button" disabled className="flex h-[22px] w-[23px] items-center justify-center text-[#aca899]">
            <span className="flex h-[15px] w-[15px] items-center justify-center border border-[#aca899] text-[11px]">{n}</span>
          </button>
        ))}
      </div>
    </div>
  );
}

function StatusBar() {
  return (
    <footer className="flex h-[18px] shrink-0 items-center bg-[#ece9d8] pb-px pl-px whitespace-nowrap">
      <p className="flex-1">Premi il tasto F1 per la Guida</p>
      <p className="w-[274px]">Lunghezza=153mm (dx=9, dy=153 / 3.4°)</p>
      <p className="w-[68px] border-l border-[#d0ccba] pl-1">&lt;- 440 -&gt;</p>
      <p className="w-[46px] border-l border-[#d0ccba] pl-1">-00955</p>
      <p className="w-[46px] border-l border-[#d0ccba] pl-[3px]">+00678</p>
    </footer>
  );
}

const TRAY: [string, ReactNode][] = [
  [
    "Rimozione hardware",
    <>
      <path d="M4 11l7-4 4 3-7 5z" fill="#b4b4b4" stroke="#444" />
      <path d="M1 3l4-2v2q6 0 6 6-2-3-6-3v2z" fill="#2fae3c" />
    </>,
  ],
  ["Foglio", <path d="M1 2h9l4 4v8H7L2 9z" fill="#fff" stroke="#8fd48a" />],
  [
    "Assistente",
    <>
      <path d="M5.500 1.500h9v9h-9z" fill="#e8eef8" stroke="#445" />
      <path d="M2 7h8v7H2z" fill="#cfe3cf" stroke="#333" />
      <path d="M8 4q0-2 2-1.500t1 2.500v1M5 12v-3" fill="none" stroke="#16164a" strokeWidth="1.500" />
    </>,
  ],
  [
    "Rete",
    <>
      <path d="M2 3h7v6H2z" fill="#1b2b5a" stroke="#aab" />
      <path d="M3 12h6" stroke="#ccc" strokeWidth="2" />
      <path d="M11 4q2 2 0 4M13 2q4 4 0 8" fill="none" stroke="#dde" />
    </>,
  ],
  [
    "Rete scollegata",
    <>
      <path d="M2 5h6v5H2zM6 2h7v6H6z" fill="#1b2b5a" stroke="#99a" />
      <path d="M8 8l6 6M14 8l-6 6" stroke="#e02a1a" strokeWidth="2.500" />
    </>,
  ],
  [
    "Sicurezza",
    <>
      <path d="M8 1q3 2 6 2 0 8-6 12-6-4-6-12 3 0 6-2z" fill="#f7d51d" stroke="#8c6d00" />
      <path d="M8 4v5M8 10.500v2" stroke="#222" strokeWidth="2" />
    </>,
  ],
  [
    "Bluetooth",
    <>
      <ellipse cx="8" cy="8" rx="5.500" ry="7" fill="#16209c" />
      <path d="M5 5l6 5-3 3V3l3 3-6 5" fill="none" stroke="#e02828" strokeWidth="1.500" />
    </>,
  ],
  [
    "Schermo",
    <>
      <path d="M1.500 2.500h13v9h-13z" fill="#888" stroke="#ccc" />
      <path d="M3 14h4M9 14h5" stroke="#222" strokeWidth="2" />
    </>,
  ],
  [
    "QuickTime",
    <>
      <circle cx="8" cy="8" r="5.500" fill="#1b8fe0" stroke="#cfeaff" strokeWidth="2.500" />
      <path d="M9 9l5 5" stroke="#cfeaff" strokeWidth="2.500" />
    </>,
  ],
  [
    "Stampante",
    <>
      <path d="M1 7l5-4h8l1 6-5 4H2z" fill="#d4d4d4" stroke="#777" />
      <path d="M7 10l3 3 5-6" fill="none" stroke="#2fb53c" strokeWidth="2.500" />
    </>,
  ],
  [
    "Grafica",
    <>
      <path d="M1.500 2.500h13v9h-13z" fill="#111" stroke="#aaa" />
      <path d="M4 8l3-3 2 4 4-4" fill="none" stroke="#fff" strokeWidth="1.500" />
      <path d="M5 14h6" stroke="#ccc" strokeWidth="2" />
    </>,
  ],
  [
    "Volume",
    <>
      <circle cx="7" cy="7" r="5" fill="#8c8c94" stroke="#444" />
      <circle cx="7" cy="7" r="2" fill="#ddd" />
      <path d="M13 4q2 4-1 8" fill="none" stroke="#ddd" />
    </>,
  ],
  [
    "Touchpad",
    <>
      <path d="M3 1q-2 4 2 7l7 2" fill="none" stroke="#eee" strokeWidth="2" />
      <path d="M6 9l8 2-3 3-6-2z" fill="#222" stroke="#fff" />
      <path d="M12 11h3v3h-3z" fill="#f5c51d" />
    </>,
  ],
  [
    "Antivirus",
    <>
      <path d="M1 1h13v13H1z" fill="#e8c26a" />
      <path d="M1 1h6q-3 3-2 6l-4 3z" fill="#2b2b20" />
      <circle cx="10.500" cy="10" r="5" fill="#1d8a35" />
      <path d="M8 10l2 2 4-4" fill="none" stroke="#fff" strokeWidth="2" />
    </>,
  ],
];

function TaskBar() {
  return (
    <div className="flex h-[34px] shrink-0 items-stretch bg-linear-to-b from-[#1d5fd0] via-[#2a6ee8] via-15% to-[#1f56d0] pt-1 text-white">
      <button type="button" className="flex w-24 items-center gap-1.5 rounded-r-xl bg-linear-to-b from-[#4fa850] via-[#3a9a3c] to-[#2f7f30] pl-2.5 font-['Liberation_Sans',sans-serif] text-[18px] leading-none font-bold italic">
        <svg viewBox="0 0 18 18" className="h-[18px] w-[18px]">
          <path d="M2 3q3-2 6-1L7 8Q4 7 1 8z" fill="#ee5a2e" />
          <path d="M9 3q3 2 7 0l-1 6q-4 1-7-1z" fill="#8ccb3c" />
          <path d="M1 9q3-1 6 0l-1 6q-3-1-6 0z" fill="#5a9cf5" />
          <path d="M8 10q3 2 7 0l-1 6q-4 1-7-1z" fill="#fcd22b" />
        </svg>
        start
      </button>
      <div className="flex w-[129px] items-center pl-3">
        <span className="mr-2 h-5 border-l-2 border-dotted border-[#123c9c]" />
        <button type="button" aria-label="Internet Explorer">
          <svg viewBox="0 0 18 18" className="h-[18px] w-[18px]">
            <path d="M4 9.500h10Q14 4.500 9 4.500T4 9.500t5 5q3 0 4.500-2" fill="none" stroke="#7cc4ff" strokeWidth="2.500" />
            <path d="M2 15Q-1 16 3 9 9 1 15 1q3 1 0 5" fill="none" stroke="#f3c53a" strokeWidth="1.500" />
          </svg>
        </button>
        <button type="button" aria-label="Chrome" className="ml-1.5">
          <svg viewBox="0 0 16 16" className="h-4 w-4">
            <circle cx="8" cy="8" r="7" fill="#f7cf2e" />
            <path d="M8 8L2 4.400A7 7 0 0 1 14.500 5z" fill="#e23a2c" />
            <path d="M8 8L2 4.400A7 7 0 0 0 7.500 15z" fill="#35a24a" />
            <circle cx="8" cy="8" r="3" fill="#3f82ee" stroke="#fff" />
          </svg>
        </button>
        <span className="mr-2 ml-auto h-5 border-l-2 border-dotted border-[#123c9c]" />
      </div>
      <button type="button" className="mt-0.5 mb-0.5 flex w-40 items-center gap-[3px] rounded-sm border border-[#163f96] bg-[#1d4fae] pl-2.5 whitespace-pre">
        <AppLogo />
        WinTrack{"  "}V11.0 - [tr...
      </button>
      <div className="flex-1" />
      <div className="flex items-center gap-0.5 border-l border-[#0b4fb0] bg-linear-to-b from-[#1ba3f2] to-[#0f83e4] pr-3 pl-2.5">
        {TRAY.map(([label, art]) => (
          <svg key={label} viewBox="0 0 16 16" className="h-4 w-4" role="img" aria-label={label}>{art}</svg>
        ))}
        <time className="pl-1">15.35</time>
      </div>
    </div>
  );
}

export default function App() {
  return (
    <div className="flex min-h-screen flex-col overflow-hidden bg-[#ece9d8] font-['DejaVu_Sans_Condensed','Liberation_Sans',sans-serif] text-[11px] leading-[14px] text-black">
      <TitleBar />
      <MenuBar />
      <ToolBar />
      <Workspace />
      <LayerBar />
      <StatusBar />
      <TaskBar />
    </div>
  );
}
